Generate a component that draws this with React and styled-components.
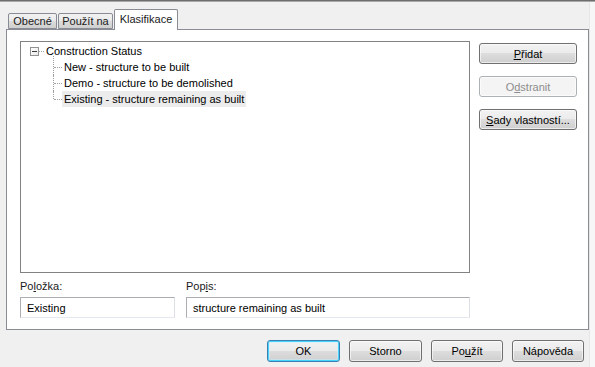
import React from 'react';
import styled, { createGlobalStyle } from 'styled-components';

const GlobalStyle = createGlobalStyle`
  html, body {
    margin: 0;
    padding: 0;
    background: #f0f0f0;
  }
  body {
    font-family: "Liberation Sans", Arial, sans-serif;
    font-size: 11px;
    color: #000;
  }
`;

const Dialog = styled.div`
  width: 595px;
  height: 367px;
  background: #f0f0f0;
  box-shadow: inset -5px 0 0 #f7f7f7, inset -6px 0 0 #e6e6e6;
  overflow: hidden;
`;

const TopLine = styled.div`
  height: 1px;
  background: #6e6e6e;
  border-bottom: 1px solid #a8a8a8;
`;

const TabStrip = styled.div`
  height: 27px;
  display: flex;
  align-items: flex-end;
  padding-left: 8px;
`;

const Tab = styled.div`
  box-sizing: border-box;
  width: ${p => p.w}px;
  height: ${p => (p.active ? 21 : 16)}px;
  margin-bottom: ${p => (p.active ? -1 : 0)}px;
  margin-right: 1px;
  position: relative;
  z-index: ${p => (p.active ? 1 : 0)};
  display: flex;
  align-items: center;
  justify-content: center;
  border: 1px solid #898c95;
  border-bottom: ${p => (p.active ? 'none' : '1px solid #898c95')};
  border-radius: 2px 2px 0 0;
  background: ${p =>
    p.active
      ? '#fff'
      : 'linear-gradient(to bottom, #f2f2f2 0%, #ebebeb 45%, #dddddd 50%, #cfcfcf 100%)'};
  color: #1a1a1a;
  white-space: nowrap;
  padding-bottom: ${p => (p.active ? 2 : 0)}px;
`;

const Panel = styled.div`
  box-sizing: border-box;
  width: 583px;
  height: 301px;
  margin-left: 6px;
  background: #fff;
  border: 1px solid #898c95;
  padding: 11px 12px 0 13px;
  display: flex;
  gap: 9px;
`;

const LeftColumn = styled.div`
  width: 450px;
  display: flex;
  flex-direction: column;
`;

const TreeBox = styled.div`
  box-sizing: border-box;
  height: 232px;
  border: 1px solid #828282;
  padding: 1px 0 0 9px;
`;

const RootRow = styled.div`
  height: 16px;
  display: flex;
  align-items: center;
`;

const Expander = styled.div`
  box-sizing: border-box;
  width: 9px;
  height: 9px;
  border: 1px solid #919191;
  background: linear-gradient(to bottom right, #ffffff, #e8e8e8);
  position: relative;
  &::after {
    content: '';
    position: absolute;
    left: 1px;
    top: 3px;
    width: 5px;
    height: 1px;
    background: #3a3a3a;
  }
`;

const Connector = styled.div`
  width: 5px;
  border-top: 1px dotted #a0a0a0;
`;

const NodeLabel = styled.span`
  padding: 0 2px;
  line-height: 16px;
  background: ${p => (p.selected ? '#ececec' : 'transparent')};
  white-space: nowrap;
`;

const Children = styled.div`
  margin-left: 23px;
`;

const ChildRow = styled.div`
  position: relative;
  height: 16px;
  display: flex;
  align-items: center;
  padding-left: 9px;
  &::before {
    content: '';
    position: absolute;
    left: 0;
    top: ${p => (p.first ? -3 : 0)}px;
    height: ${p => (p.last ? 8 : 16) + (p.first ? 3 : 0)}px;
    border-left: 1px dotted #a0a0a0;
  }
  &::after {
    content: '';
    position: absolute;
    left: 1px;
    top: 8px;
    width: 8px;
    border-top: 1px dotted #a0a0a0;
  }
`;

const Fields = styled.div`
  display: grid;
  grid-template-columns: 155px 284px;
  column-gap: 11px;
  margin-top: 6px;
`;

const FieldLabel = styled.label`
  line-height: 14px;
  color: #1a1a1a;
`;

const TextBox = styled.div`
  box-sizing: border-box;
  height: 21px;
  margin-top: 4px;
  padding-left: 6px;
  display: flex;
  align-items: center;
  border: 1px solid #abadb3;
  border-right-color: #dbdfe6;
  border-bottom-color: #e3e9ef;
  background: #fff;
  white-space: nowrap;
  overflow: hidden;
`;

const RightColumn = styled.div`
  display: flex;
  flex-direction: column;
  gap: 12px;
  padding-top: 2px;
`;

const Button = styled.button`
  box-sizing: border-box;
  width: ${p => p.w || 98}px;
  height: ${p => p.h || 21}px;
  padding: 0;
  font-family: inherit;
  font-size: 11px;
  color: ${p => (p.disabled ? '#8d8d8d' : '#000')};
  border: 1px solid ${p => (p.disabled ? '#adb2b5' : p.primary ? '#3c7fb1' : '#707070')};
  border-radius: 3px;
  background: ${p =>
    p.disabled
      ? '#f4f4f4'
      : p.primary
      ? 'linear-gradient(to bottom, #eaf6fd 0%, #d9f0fc 48%, #bee6fd 50%, #a7d9f5 100%)'
      : 'linear-gradient(to bottom, #f2f2f2 0%, #ebebeb 48%, #dddddd 50%, #cfcfcf 100%)'};
  box-shadow: ${p => (p.primary ? 'inset 0 0 0 1px #8ee3fa' : 'inset 0 0 0 1px rgba(255,255,255,0.6)')};
  white-space: nowrap;
`;

const PrimaryFace = styled.span`
  display: block;
`;

const U = styled.span`
  text-decoration: underline;
  text-underline-offset: 1px;
`;

const Footer = styled.div`
  display: flex;
  justify-content: flex-end;
  gap: 9px;
  margin-top: 10px;
  padding-right: 11px;
`;

const OkButton = styled(Button)`
  background: linear-gradient(to bottom, #f2f2f2 0%, #ebebeb 48%, #dddddd 50%, #cfcfcf 100%);
  border-color: #3c7fb1;
  box-shadow: inset 0 0 0 1px #48d2fe, inset 0 0 0 2px rgba(200, 240, 255, 0.5);
`;

export default function App() {
  return (
    <Dialog>
      <GlobalStyle />
      <TopLine />
      <TabStrip>
        <Tab w={49}>Obecné</Tab>
        <Tab w={55}>Použít na</Tab>
        <Tab w={64} active>Klasifikace</Tab>
      </TabStrip>
      <Panel>
        <LeftColumn>
          <TreeBox>
            <RootRow>
              <Expander />
              <Connector />
              <NodeLabel>Construction Status</NodeLabel>
            </RootRow>
            <Children>
              <ChildRow first>
                <NodeLabel>New - structure to be built</NodeLabel>
              </ChildRow>
              <ChildRow>
                <NodeLabel>Demo - structure to be demolished</NodeLabel>
              </ChildRow>
              <ChildRow last>
                <NodeLabel selected>Existing - structure remaining as built</NodeLabel>
              </ChildRow>
            </Children>
          </TreeBox>
          <Fields>
            <FieldLabel>Po<U>l</U>ožka:</FieldLabel>
            <FieldLabel>Pop<U>i</U>s:</FieldLabel>
            <TextBox>Existing</TextBox>
            <TextBox>structure remaining as built</TextBox>
          </Fields>
        </LeftColumn>
        <RightColumn>
          <Button><U>P</U>řidat</Button>
          <Button disabled>O<U>d</U>stranit</Button>
          <Button><U>S</U>ady vlastností...</Button>
        </RightColumn>
      </Panel>
      <Footer>
        <OkButton w={73} h={22}>
          <PrimaryFace>OK</PrimaryFace>
        </OkButton>
        <Button w={73} h={22}>Storno</Button>
        <Button w={72} h={22}>Po<U>u</U>žít</Button>
        <Button w={72} h={22}>Nápověda</Button>
      </Footer>
    </Dialog>
  );
}
